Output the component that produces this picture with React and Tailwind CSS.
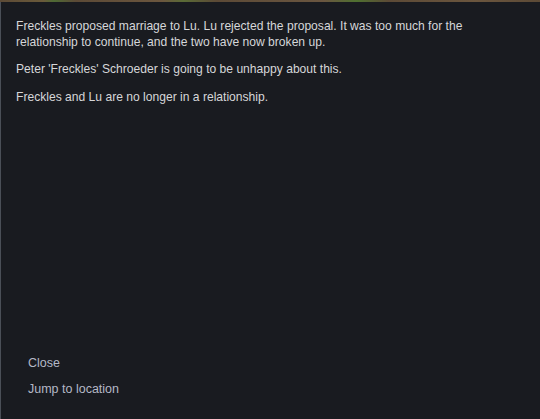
export default function App() {
    const paragraphs = [
        'Freckles proposed marriage to Lu. Lu rejected the proposal. It was too much for the relationship to continue, and the two have now broken up.',
        "Peter 'Freckles' Schroeder is going to be unhappy about this.",
        'Freckles and Lu are no longer in a relationship.',
    ]

    return (
        <div className="w-[540px] h-[419px] flex flex-col bg-[#191b20] overflow-hidden font-['Liberation_Sans',Arial,sans-serif]">
            {/* strip of the game world peeking over the panel */}
            <div className="h-[2px] shrink-0 bg-[linear-gradient(90deg,#5c4a36_0%,#6a5a3a_8%,#4e6a34_10%,#5c4a36_14%,#6b563e_30%,#5a6b36_34%,#5c4a36_40%,#6a5640_60%,#4f7030_66%,#5c4a36_72%,#6b563e_88%,#5c4a36_100%)]" />

            <div className="flex-1 flex flex-col border-l border-[#4a4f57] pl-[15px] pr-4 pt-[17px] pb-[22px]">
                <div className="flex flex-col gap-[12px] text-[12.1px] leading-[15.5px] text-[#d6d7d9] w-[470px]">
                    {paragraphs.map((p, i) => (
                        <p key={i}>{p}</p>
                    ))}
                </div>

                <div className="mt-auto flex flex-col gap-[10px] pl-[12px] text-[12.5px] leading-[15.5px] text-[#b4b8c6]">
                    <span>Close</span>
                    <span>Jump to location</span>
                </div>
            </div>
        </div>
    )
}
